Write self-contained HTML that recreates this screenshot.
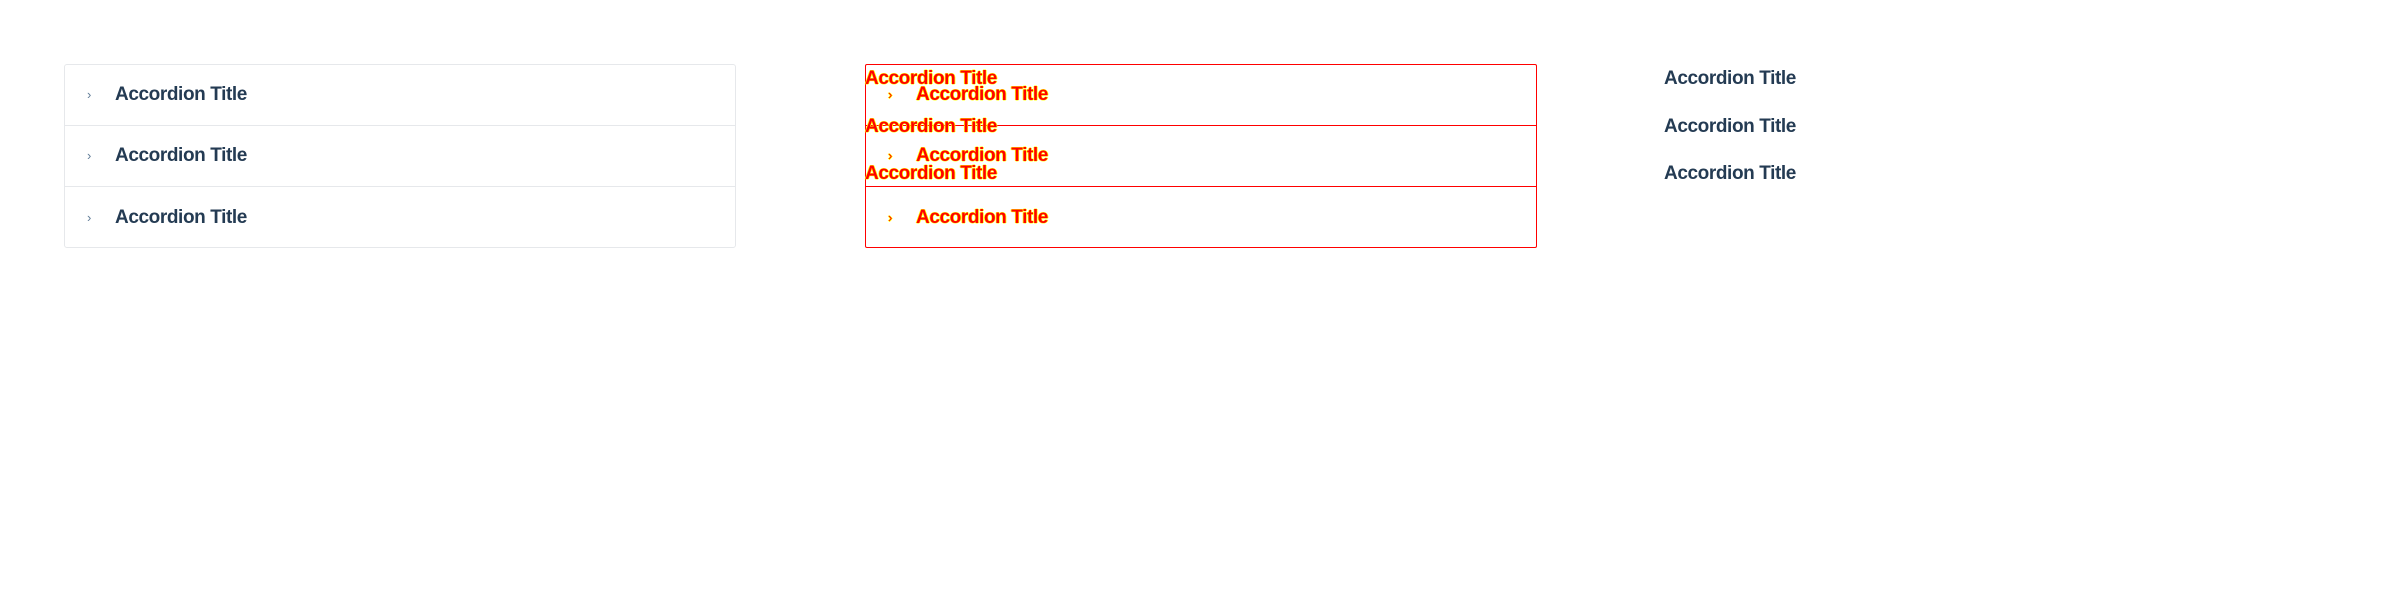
<!DOCTYPE html>
<html><head><meta charset="utf-8"><style>
*{margin:0;padding:0;box-sizing:border-box}
body{width:2400px;height:600px;background:#fff;font-family:"Liberation Sans",sans-serif;position:relative;overflow:hidden}
.box{position:absolute;top:64px;width:672px;height:184px;border:1px solid #e6e8eb;border-radius:3px}
.row{height:61px;border-bottom:1px solid #e6e8eb;position:relative}
.box .row:last-child{border-bottom:none}
.chev{position:absolute;left:22px;top:50%;transform:translateY(-52%);font-size:13px;color:#627d98}
.t{position:absolute;left:50px;top:50%;transform:translateY(-50%);font-size:19px;font-weight:bold;color:#243b53;letter-spacing:-0.4px;white-space:nowrap}
.red{border:1px solid #f00;border-radius:2px}
.red .row{border-bottom:1px solid #f00}
.red .t,.red .chev,.ov{color:#f00;text-shadow:0.7px 0 #ff0,-0.7px 0 #ff0,0 0.7px #ff0,0 -0.7px #ff0}
.ov{position:absolute;font-size:19px;font-weight:bold;letter-spacing:-0.4px;white-space:nowrap;transform:translateY(-50%)}
.c3{position:absolute;left:1664px;font-size:19px;font-weight:bold;color:#243b53;transform:translateY(-50%);letter-spacing:-0.4px}
</style></head><body>
<div class="box" style="left:64px">
<div class="row"><span class="chev">›</span><span class="t">Accordion Title</span></div>
<div class="row"><span class="chev">›</span><span class="t">Accordion Title</span></div>
<div class="row"><span class="chev">›</span><span class="t">Accordion Title</span></div>
</div>
<div class="box red" style="left:865px">
<div class="row"><span class="chev">›</span><span class="t">Accordion Title</span></div>
<div class="row"><span class="chev">›</span><span class="t">Accordion Title</span></div>
<div class="row"><span class="chev">›</span><span class="t">Accordion Title</span></div>
</div>
<div class="ov" style="left:865px;top:79px">Accordion Title</div>
<div class="ov" style="left:865px;top:127px">Accordion Title</div>
<div class="ov" style="left:865px;top:174px">Accordion Title</div>
<div class="c3" style="top:79px">Accordion Title</div>
<div class="c3" style="top:127px">Accordion Title</div>
<div class="c3" style="top:174px">Accordion Title</div>
</body></html>
